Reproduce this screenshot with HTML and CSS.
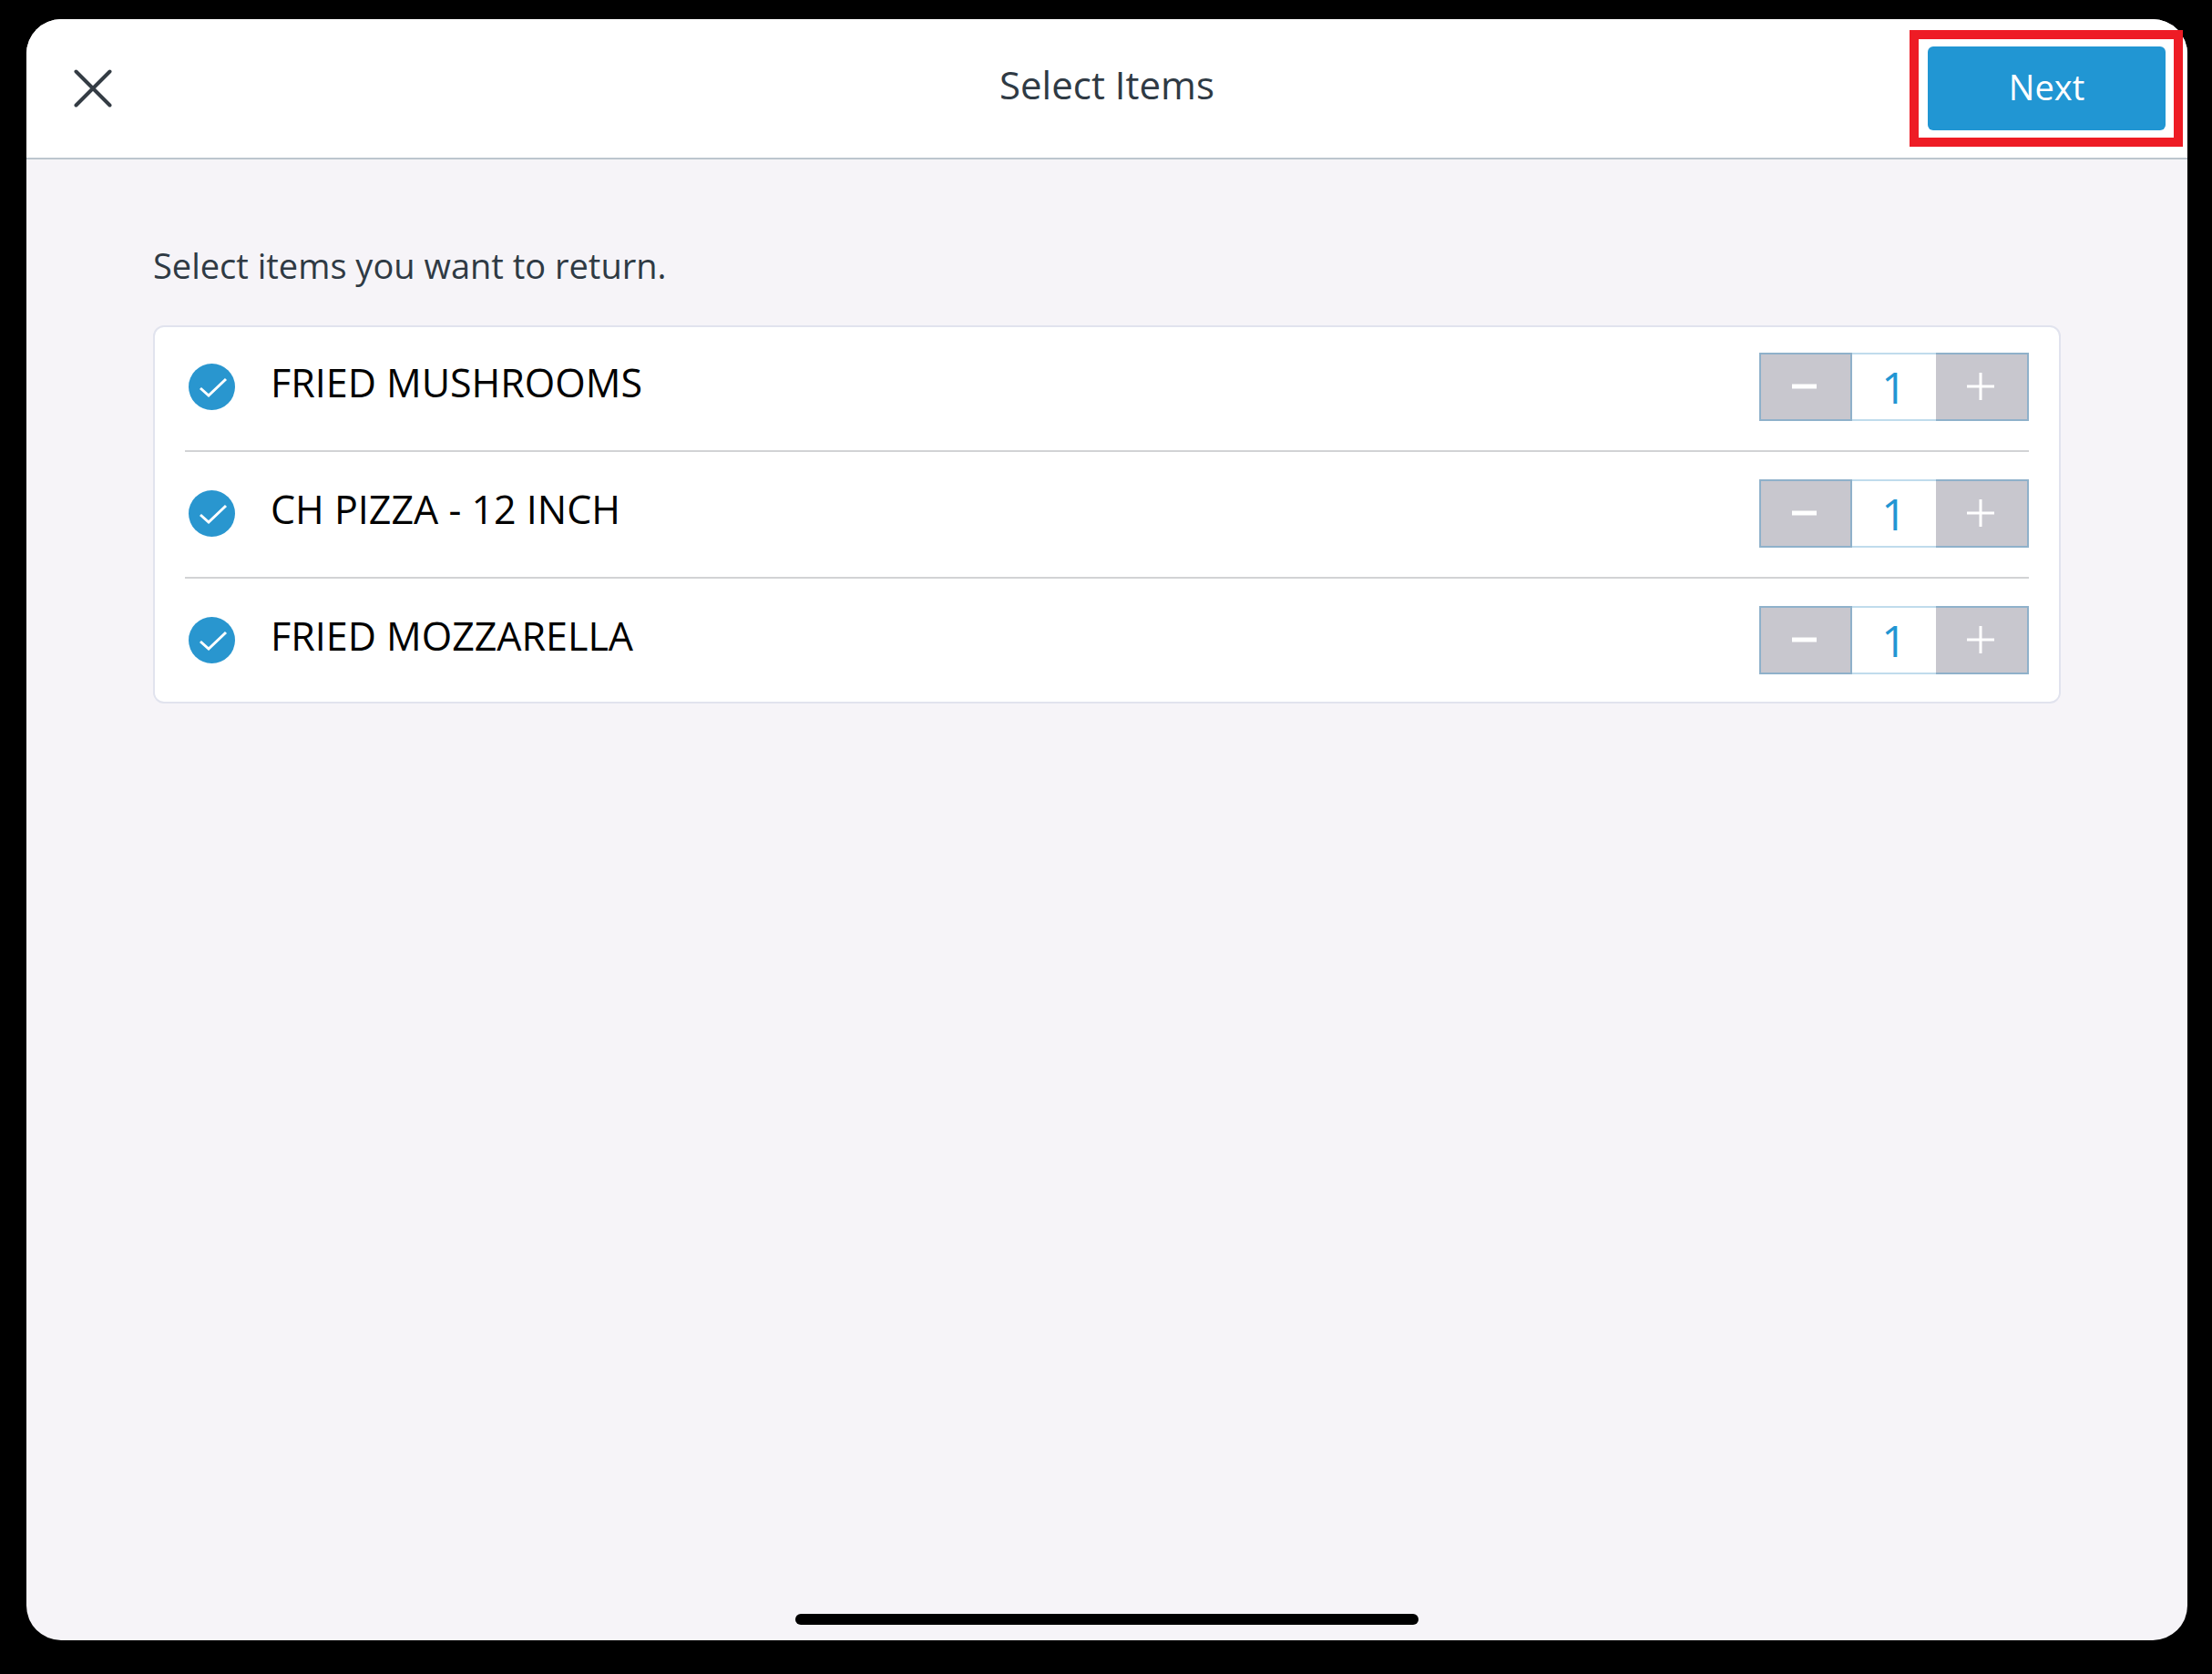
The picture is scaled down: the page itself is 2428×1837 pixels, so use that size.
FILE: index.html
```html
<!DOCTYPE html>
<html lang="en">
<head>
    <meta charset="UTF-8">
    <meta name="viewport" content="width=device-width, initial-scale=1.0">
    <title>Select Items</title>
    <link rel="stylesheet" href="styles.css">
</head>
<body>
    <div class="screen">
        <header class="topbar">
            <button class="close-btn" type="button" aria-label="Close">
                <svg viewBox="0 0 42 42"><path d="M2.5 2.5L39.5 39.5M39.5 2.5L2.5 39.5"/></svg>
            </button>
            <h1>Select Items</h1>
            <div class="highlight">
                <button class="next-btn" type="button">Next</button>
            </div>
        </header>

        <main>
            <p class="intro">Select items you want to return.</p>

            <ul class="item-list">
                <li class="item">
                    <input type="checkbox" id="item1" checked>
                    <label for="item1">FRIED MUSHROOMS</label>
                    <div class="stepper">
                        <button class="minus" type="button" aria-label="Decrease"><svg viewBox="0 0 32 32"><path d="M1 15H28"/></svg></button>
                        <input type="text" inputmode="numeric" value="1" aria-label="Fried mushrooms quantity">
                        <button class="plus" type="button" aria-label="Increase"><svg viewBox="0 0 32 32"><path d="M0 15H30M15 0V30"/></svg></button>
                    </div>
                </li>
                <li class="item">
                    <input type="checkbox" id="item2" checked>
                    <label for="item2">CH PIZZA - 12 INCH</label>
                    <div class="stepper">
                        <button class="minus" type="button" aria-label="Decrease"><svg viewBox="0 0 32 32"><path d="M1 15H28"/></svg></button>
                        <input type="text" inputmode="numeric" value="1" aria-label="Pizza quantity">
                        <button class="plus" type="button" aria-label="Increase"><svg viewBox="0 0 32 32"><path d="M0 15H30M15 0V30"/></svg></button>
                    </div>
                </li>
                <li class="item">
                    <input type="checkbox" id="item3" checked>
                    <label for="item3">FRIED MOZZARELLA</label>
                    <div class="stepper">
                        <button class="minus" type="button" aria-label="Decrease"><svg viewBox="0 0 32 32"><path d="M1 15H28"/></svg></button>
                        <input type="text" inputmode="numeric" value="1" aria-label="Fried mozzarella quantity">
                        <button class="plus" type="button" aria-label="Increase"><svg viewBox="0 0 32 32"><path d="M0 15H30M15 0V30"/></svg></button>
                    </div>
                </li>
            </ul>
        </main>

        <div class="home-bar"></div>
    </div>
</body>
</html>
```
FILE: styles.css
```css
:root {
    --blue: #2196d3;
    --text: #2f3a44;
    --screen-bg: #f6f4f8;
    --grey: #c8c7ce;
}

* {
    box-sizing: border-box;
}

body {
    margin: 0;
    padding: 21px 27px 37px 29px;
    min-height: 100vh;
    display: flex;
    background: #000;
    color: var(--text);
    font-family: "Open Sans", "Noto Sans", sans-serif;
}

button, input {
    font-family: inherit;
    margin: 0;
    padding: 0;
    border: none;
}

button {
    cursor: pointer;
}

.screen {
    flex: 1;
    display: flex;
    flex-direction: column;
    background: var(--screen-bg);
    border-radius: 38px;
}

/* Top bar */
.topbar {
    display: grid;
    grid-template-columns: 1fr auto 1fr;
    align-items: center;
    padding: 12px 5px;
    background: #fff;
    border-bottom: 2px solid #bcc6ce;
    border-radius: 38px 38px 0 0;
}

.topbar h1 {
    margin: 0;
    padding-bottom: 8px;
    font-size: 42px;
    font-weight: 400;
    line-height: 56px;
}

.close-btn {
    width: 42px;
    height: 42px;
    margin-left: 47px;
    background: none;
}

.close-btn svg {
    display: block;
    fill: none;
    stroke: #343c44;
    stroke-width: 4;
    stroke-linecap: round;
}

/* Red frame around the next step */
.highlight {
    justify-self: end;
    padding: 8px 9px 8px 10px;
    border: 10px solid #ee1c25;
}

.next-btn {
    display: block;
    width: 261px;
    height: 92px;
    padding-bottom: 4px;
    border-radius: 6px;
    background: var(--blue);
    color: #fff;
    font-size: 38px;
    font-weight: 500;
}

/* Item list */
main {
    flex: 1;
    padding: 88px 139px;
}

.intro {
    margin: 0 0 38px;
    font-size: 38px;
    line-height: 56px;
}

.item-list {
    list-style: none;
    margin: 0;
    padding: 28px 33px 30px;
    background: #fff;
    border: 2px solid #e1e3ee;
    border-radius: 12px;
}

.item {
    display: flex;
    align-items: center;
}

.item + .item {
    margin-top: 32px;
    padding-top: 30px;
    border-top: 2px solid #d2d3d5;
}

.item input[type="checkbox"] {
    appearance: none;
    width: 51px;
    height: 51px;
    margin: 0 39px 0 4px;
    border-radius: 50%;
    background: #2996cf url("data:image/svg+xml,%3Csvg xmlns='http://www.w3.org/2000/svg' viewBox='0 0 51 51' fill='none' stroke='white' stroke-width='3'%3E%3Cpath d='M13 27L22 35L41 17'/%3E%3C/svg%3E") center / 100%;
}

.item label {
    flex: 1;
    padding-bottom: 9px;
    color: #000;
    font-size: 43px;
    line-height: 56px;
}

/* Quantity */
.stepper {
    display: flex;
    height: 75px;
}

.stepper button {
    width: 102px;
    display: flex;
    align-items: center;
    justify-content: center;
    background: var(--grey);
    border: 2px solid #8fb1ca;
}

.stepper .plus {
    border-left: none;
}

.stepper svg {
    width: 32px;
    height: 32px;
    fill: none;
    stroke: #fff;
    stroke-width: 3;
}

.stepper .minus svg {
    stroke-width: 5;
}

.stepper input {
    width: 92px;
    border: solid #c0dcec;
    border-width: 2px 0;
    background: #fff;
    color: var(--blue);
    font-size: 48px;
    text-align: center;
}

/* Home indicator */
.home-bar {
    width: 684px;
    height: 12px;
    margin: 0 auto 17px;
    border-radius: 6px;
    background: #000;
}
```
